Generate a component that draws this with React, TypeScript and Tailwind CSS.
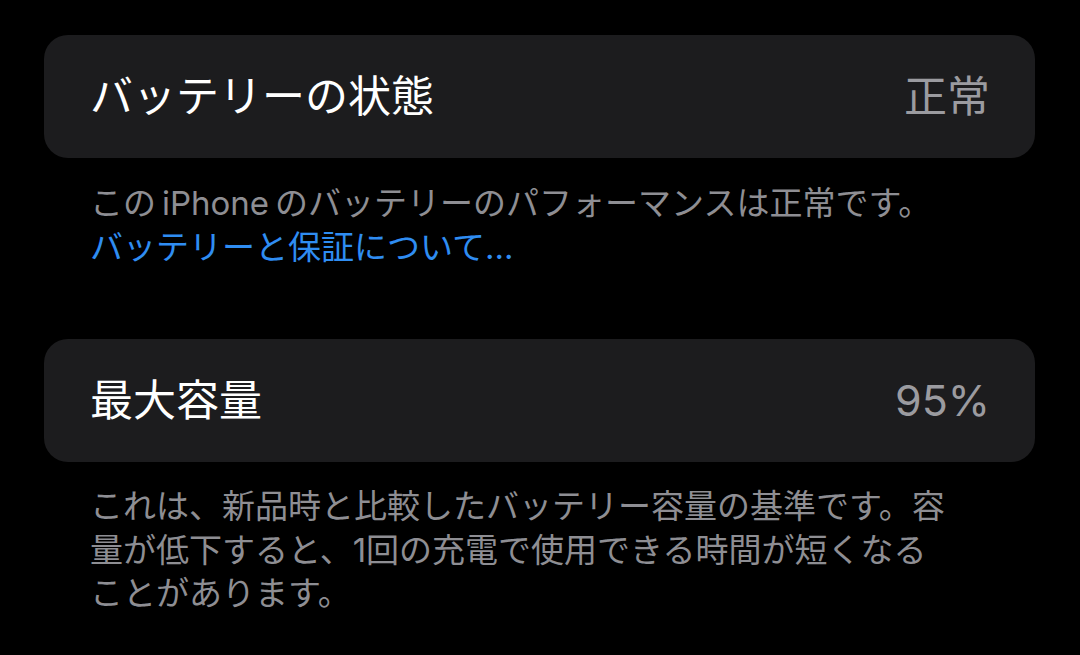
import React from 'react';

const font = { fontFamily: 'Inter, "Noto Sans CJK JP", sans-serif' };

interface RowProps {
  label: string;
  value: string;
}

const Row = ({ label, value }: RowProps) => (
  <div className="h-[123px] rounded-[24px] bg-[#1c1c1e] pl-[46px] pr-[45px] flex items-center justify-between">
    <span className="text-[43px] text-white leading-none">{label}</span>
    <span className="text-[43px] text-[#9b9ba0] leading-none">{value}</span>
  </div>
);

const App = () => {
  return (
    <div className="w-[1080px] h-[655px] bg-black pt-[35px] pl-[44px] pr-[45px] overflow-hidden" style={font}>
      {/* Battery health */}
      <Row label="バッテリーの状態" value="正常" />
      <div className="pl-[46px] pt-[24px] text-[33px] leading-[43.5px] text-[#8e8e93]">
        <p>
          この<span className="mx-[6px]">iPhone</span>のバッテリーのパフォーマンスは正常です。
        </p>
        <p className="text-[#2f8df2]">バッテリーと保証について...</p>
      </div>

      {/* Max capacity */}
      <div className="mt-[70px]">
        <Row label="最大容量" value="95%" />
      </div>
      <div className="pl-[46px] pt-[23px] text-[33px] leading-[43.5px] text-[#8e8e93]">
        <p>これは、新品時と比較したバッテリー容量の基準です。容</p>
        <p>量が低下すると、1回の充電で使用できる時間が短くなる</p>
        <p>ことがあります。</p>
      </div>
    </div>
  );
};

export default App;
